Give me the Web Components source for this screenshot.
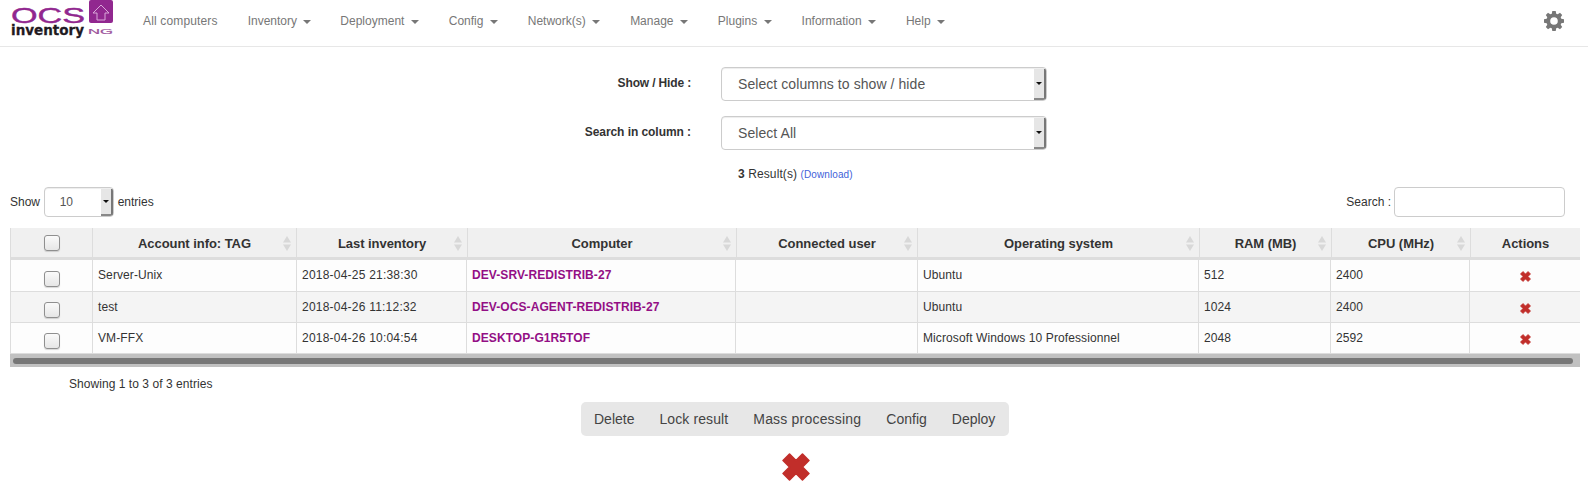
<!DOCTYPE html>
<html>
<head>
<meta charset="utf-8">
<title>OCS Inventory</title>
<style>
    html, body { margin: 0; padding: 0; background: #fff; }
    body { font-family: "Liberation Sans", Arial, sans-serif; font-size: 12px; color: #333; width: 1588px; height: 495px; overflow: hidden; }
</style>
</head>
<body>
<ocs-navbar>
    <ocs-nav-item style="letter-spacing:.15px">All computers</ocs-nav-item>
    <ocs-nav-item caret style="margin-right:-1px">Inventory</ocs-nav-item>
    <ocs-nav-item caret>Deployment</ocs-nav-item>
    <ocs-nav-item caret>Config</ocs-nav-item>
    <ocs-nav-item caret>Network(s)</ocs-nav-item>
    <ocs-nav-item caret>Manage</ocs-nav-item>
    <ocs-nav-item caret>Plugins</ocs-nav-item>
    <ocs-nav-item caret>Information</ocs-nav-item>
    <ocs-nav-item caret>Help</ocs-nav-item>
</ocs-navbar>
<ocs-form-row label="Show / Hide :" spacing="-.15px" style="margin-top:20px"><ocs-select style="width:326px;height:34px;font-size:14px;padding-left:16px;letter-spacing:.07px">Select columns to show / hide</ocs-select></ocs-form-row>
<ocs-form-row label="Search in column :" spacing="-.06px" style="margin-top:15px"><ocs-select style="width:326px;height:34px;font-size:14px;padding-left:16px;letter-spacing:.07px">Select All</ocs-select></ocs-form-row>
<ocs-results count="3"></ocs-results>
<ocs-table-tools></ocs-table-tools>
<ocs-data-table></ocs-data-table>
<ocs-table-info>Showing 1 to 3 of 3 entries</ocs-table-info>
<ocs-action-bar>
    <span>Delete</span><span style="letter-spacing:.1px">Lock result</span><span style="letter-spacing:.2px">Mass processing</span><span>Config</span><span>Deploy</span>
</ocs-action-bar>
<ocs-remove-all></ocs-remove-all>

<script>
const REMOVE_ICON = '<polygon points="6,0 12,6 18,0 24,6 18,12 24,18 18,24 12,18 6,24 0,18 6,12 0,6" fill="#c12e2a" stroke="#c12e2a" stroke-width="1.5" stroke-linejoin="round"/>';

class OcsNavbar extends HTMLElement {
    constructor() {
        super();
        this.attachShadow({ mode: 'open' });
    }

    connectedCallback() {
        this.shadowRoot.innerHTML = `
            <style>
                :host { display: flex; align-items: center; height: 46px; border-bottom: 1px solid #e7e7e7; background: #fff; }
                .logo { width: 128px; height: 46px; flex: none; }
                .items { display: flex; align-items: center; height: 42px; margin-bottom: 4px; }
                .gear { margin-left: auto; margin-right: 24px; margin-bottom: 4px; width: 20px; height: 20px; }
            </style>
            <svg class="logo" viewBox="0 0 128 46">
                <text x="11" y="23" font-family="Liberation Sans" font-size="22" fill="#91278f" stroke="#91278f" stroke-width=".4" textLength="74" lengthAdjust="spacingAndGlyphs">OCS</text>
                <rect x="89" y="0" width="24" height="23" rx="2" fill="#91278f"/>
                <path d="M101 5l8 8h-4v7h-8v-7h-4z" fill="none" stroke="#d9a8d8" stroke-width="1"/>
                <text x="11" y="35" font-family="DejaVu Sans" font-size="14" font-weight="bold" fill="#1f1a22" stroke="#1f1a22" stroke-width=".3" textLength="73" lengthAdjust="spacingAndGlyphs">inventory</text>
                <text x="88" y="34" font-family="Liberation Sans" font-size="8" fill="#9b4f9a" stroke="#9b4f9a" stroke-width=".2" textLength="25" lengthAdjust="spacingAndGlyphs">NG</text>
            </svg>
            <div class="items"><slot></slot></div>
            <svg class="gear" viewBox="0 0 20 20">
                <path fill="#777" fill-rule="evenodd" d="M8.3 0h3.4l.5 2.7 1.5.6L16 1.8l2.2 2.2-1.5 2.3.6 1.5 2.7.5v3.4l-2.7.5-.6 1.5 1.5 2.3-2.2 2.2-2.3-1.5-1.5.6-.5 2.7H8.3l-.5-2.7-1.5-.6L4 18.2 1.8 16l1.5-2.3-.6-1.5L0 11.7V8.3l2.7-.5.6-1.5L1.8 4 4 1.8l2.3 1.5 1.5-.6zM10 6.2a3.8 3.8 0 1 0 0 7.6 3.8 3.8 0 0 0 0-7.6z"/>
            </svg>
        `;
    }
}

class OcsNavItem extends HTMLElement {
    constructor() {
        super();
        this.attachShadow({ mode: 'open' });
    }

    connectedCallback() {
        this.shadowRoot.innerHTML = `
            <style>
                :host { display: block; padding: 0 15px; font-size: 12px; color: #777; white-space: nowrap; }
                .caret { display: inline-block; width: 0; height: 0; margin-left: 3px; vertical-align: middle; border-top: 4px solid #777; border-left: 4px solid transparent; border-right: 4px solid transparent; }
            </style>
            <slot></slot>${this.hasAttribute('caret') ? ' <span class="caret"></span>' : ''}
        `;
    }
}

class OcsSelect extends HTMLElement {
    constructor() {
        super();
        this.attachShadow({ mode: 'open' });
    }

    connectedCallback() {
        this.shadowRoot.innerHTML = `
            <style>
                :host { display: flex; position: relative; align-items: center; box-sizing: border-box; border: 1px solid #ccc; border-radius: 4px; background: #fff; color: #555; white-space: nowrap; overflow: hidden; box-shadow: inset 0 1px 1px rgba(0,0,0,.075); }
                .btn { position: absolute; right: 0; top: 1px; bottom: 0; width: 12px; box-sizing: border-box; background: #e6e6e6; border-right: 2px solid #777; border-bottom: 2px solid #888; display: flex; align-items: center; justify-content: center; }
                .btn i { width: 0; height: 0; border-top: 3px solid #111; border-left: 3px solid transparent; border-right: 3px solid transparent; }
            </style>
            <slot></slot>
            <div class="btn"><i></i></div>
        `;
    }
}

class OcsFormRow extends HTMLElement {
    constructor() {
        super();
        this.attachShadow({ mode: 'open' });
    }

    connectedCallback() {
        this.shadowRoot.innerHTML = `
            <style>
                :host { display: flex; align-items: center; }
                label { width: 691px; text-align: right; font-weight: bold; font-size: 12px; margin-right: 30px; color: #333; position: relative; bottom: 1px; letter-spacing: ${this.getAttribute('spacing') || 0}; }
            </style>
            <label>${this.getAttribute('label')}</label>
            <slot></slot>
        `;
    }
}

class OcsResults extends HTMLElement {
    constructor() {
        super();
        this.attachShadow({ mode: 'open' });
    }

    connectedCallback() {
        this.shadowRoot.innerHTML = `
            <style>
                :host { display: block; padding-left: 738px; margin-top: 16px; height: 17px; line-height: 17px; font-size: 12px; color: #333; letter-spacing: .1px; }
                a { color: #3f5fd9; font-size: 10px; text-decoration: none; }
            </style>
            <b>${this.getAttribute('count')}</b> Result(s) <a href="#">(Download)</a>
        `;
    }
}

class OcsTableTools extends HTMLElement {
    constructor() {
        super();
        this.attachShadow({ mode: 'open' });
    }

    connectedCallback() {
        this.shadowRoot.innerHTML = `
            <style>
                :host { display: flex; align-items: center; margin-top: 4px; height: 30px; padding: 0 23px 0 10px; font-size: 12px; color: #333; }
                ocs-select { width: 70px; height: 30px; padding-left: 15px; margin: 0 4px 0 3.6px; font-size: 12px; }
                .right { margin-left: auto; display: flex; align-items: center; }
                .box { width: 171px; height: 30px; box-sizing: border-box; border: 1px solid #ccc; border-radius: 4px; margin-left: 3px; background: #fff; }
            </style>
            <span>Show</span><ocs-select>10</ocs-select><span>entries</span>
            <div class="right"><span>Search :</span><div class="box"></div></div>
        `;
    }
}

class OcsCheckbox extends HTMLElement {
    constructor() {
        super();
        this.attachShadow({ mode: 'open' });
    }

    connectedCallback() {
        this.shadowRoot.innerHTML = `
            <style>
                :host { display: block; box-sizing: border-box; width: 16px; height: 16px; margin: 0 auto; border: 1px solid #8f8f8f; border-radius: 3px; background: linear-gradient(#fafafa, #e6e6e6); box-shadow: 0 1px 1px rgba(0,0,0,.15); }
            </style>
        `;
    }
}

class OcsSortArrows extends HTMLElement {
    constructor() {
        super();
        this.attachShadow({ mode: 'open' });
    }

    connectedCallback() {
        this.shadowRoot.innerHTML = `
            <style>
                :host { position: absolute; right: 5px; top: 8px; display: block; width: 8px; height: 15px; }
                svg { display: block; }
            </style>
            <svg width="8" height="15" viewBox="0 0 8 15"><path fill="#d8d8d8" d="M4 0l4 6.5H0zM4 15L0 8.5h8z"/></svg>
        `;
    }
}

class OcsDataTable extends HTMLElement {
    constructor() {
        super();
        this.attachShadow({ mode: 'open' });
    }

    connectedCallback() {
        const heads = ['', 'Account info: TAG', 'Last inventory', 'Computer', 'Connected user', 'Operating system', 'RAM (MB)', 'CPU (MHz)', 'Actions'];
        // the header and the body are two tables, their column lines are a pixel apart
        const headWidths = [82, 204, 171, 269, 181, 282, 132, 139, 110];
        const bodyWidths = [82, 204, 170, 269, 182, 281, 132, 139, 111];
        const rows = [
            ['Server-Unix', '2018-04-25 21:38:30', 'DEV-SRV-REDISTRIB-27', '', 'Ubuntu', '512', '2400'],
            ['test', '2018-04-26 11:12:32', 'DEV-OCS-AGENT-REDISTRIB-27', '', 'Ubuntu', '1024', '2400'],
            ['VM-FFX', '2018-04-26 10:04:54', 'DESKTOP-G1R5TOF', '', 'Microsoft Windows 10 Professionnel', '2048', '2592'],
        ];
        const colgroup = widths => widths.map(w => `<col style="width:${w}px">`).join('');
        const headCells = heads.map((h, i) => {
            if (i === 0) return '<th><ocs-checkbox></ocs-checkbox></th>';
            return `<th>${h}${i < 8 ? '<ocs-sort-arrows></ocs-sort-arrows>' : ''}</th>`;
        }).join('');
        const bodyRows = rows.map(r => `
            <tr>
                <td class="chk"><ocs-checkbox></ocs-checkbox></td>
                ${r.map((v, i) => {
                    if (i === 2) return `<td><a href="#">${v}</a></td>`;
                    return `<td${i === 1 ? ' class="date"' : ''}>${v}</td>`;
                }).join('')}
                <td class="act"><svg width="11" height="11" viewBox="-1 -1 26 26">${REMOVE_ICON}</svg></td>
            </tr>`).join('');
        this.shadowRoot.innerHTML = `
            <style>
                :host { display: block; margin: 11px 8px 0 10px; width: 1570px; font-size: 12px; color: #333; }
                table { border-collapse: separate; border-spacing: 0; table-layout: fixed; width: 1570px; }
                th { position: relative; height: 32px; padding: 2px 0 0; background: #f0f0f0; border-left: 1px solid #ddd; border-bottom: 3px solid #ddd; box-sizing: border-box; font-size: 13px; font-weight: bold; text-align: center; color: #333; letter-spacing: -.05px; }
                th:first-child { padding-top: 0; }
                td { height: 31px; padding: 7px 5px 0; vertical-align: top; border-left: 1px solid #ddd; border-bottom: 1px solid #ddd; box-sizing: border-box; line-height: 17px; letter-spacing: .1px; }
                tr:nth-child(1) td { height: 32px; }
                tr:nth-child(odd) td { background: #fdfdfd; }
                tr:nth-child(even) td { background: #f4f4f4; }
                td.date { letter-spacing: .22px; }
                tr td.chk { padding: 10px 0 0; }
                tr:nth-child(1) td.chk { padding-top: 11px; }
                tr td.act { padding: 11px 0 0; text-align: center; }
                a { color: #930f85; font-weight: bold; text-decoration: none; letter-spacing: .08px; }
                td.act svg { display: block; margin: 0 auto; }
                .scroll { height: 13px; background: #c1c1c1; display: flex; align-items: center; padding: 0 3px; box-sizing: border-box; }
                .scroll div { flex: 1; height: 6px; background: #777; border-radius: 3px; margin-right: 4px; }
            </style>
            <table><colgroup>${colgroup(headWidths)}</colgroup><tr>${headCells}</tr></table>
            <table><colgroup>${colgroup(bodyWidths)}</colgroup>${bodyRows}</table>
            <div class="scroll"><div></div></div>
        `;
    }
}

class OcsTableInfo extends HTMLElement {
    constructor() {
        super();
        this.attachShadow({ mode: 'open' });
    }

    connectedCallback() {
        this.shadowRoot.innerHTML = `
            <style>
                :host { display: block; padding-left: 69px; margin-top: 9px; font-size: 12px; line-height: 17px; color: #333; letter-spacing: .05px; }
            </style>
            <slot></slot>
        `;
    }
}

class OcsActionBar extends HTMLElement {
    constructor() {
        super();
        this.attachShadow({ mode: 'open' });
    }

    connectedCallback() {
        this.shadowRoot.innerHTML = `
            <style>
                :host { display: flex; gap: 25px; box-sizing: border-box; width: 428px; height: 34px; margin: 9px 0 0 581px; padding: 0 13px 0 13px; align-items: center; background: #e7e7e7; border-radius: 5px; font-size: 14px; color: #444; white-space: nowrap; }
            </style>
            <slot></slot>
        `;
    }
}

class OcsRemoveAll extends HTMLElement {
    constructor() {
        super();
        this.attachShadow({ mode: 'open' });
    }

    connectedCallback() {
        this.shadowRoot.innerHTML = `
            <style>
                :host { display: block; margin: 17px 0 0 782px; width: 28px; height: 28px; }
                svg { display: block; }
            </style>
            <svg width="28" height="28" viewBox="-1 -1 26 26">${REMOVE_ICON}</svg>
        `;
    }
}

customElements.define('ocs-navbar', OcsNavbar);
customElements.define('ocs-nav-item', OcsNavItem);
customElements.define('ocs-select', OcsSelect);
customElements.define('ocs-form-row', OcsFormRow);
customElements.define('ocs-results', OcsResults);
customElements.define('ocs-table-tools', OcsTableTools);
customElements.define('ocs-checkbox', OcsCheckbox);
customElements.define('ocs-sort-arrows', OcsSortArrows);
customElements.define('ocs-data-table', OcsDataTable);
customElements.define('ocs-table-info', OcsTableInfo);
customElements.define('ocs-action-bar', OcsActionBar);
customElements.define('ocs-remove-all', OcsRemoveAll);
</script>
</body>
</html>
